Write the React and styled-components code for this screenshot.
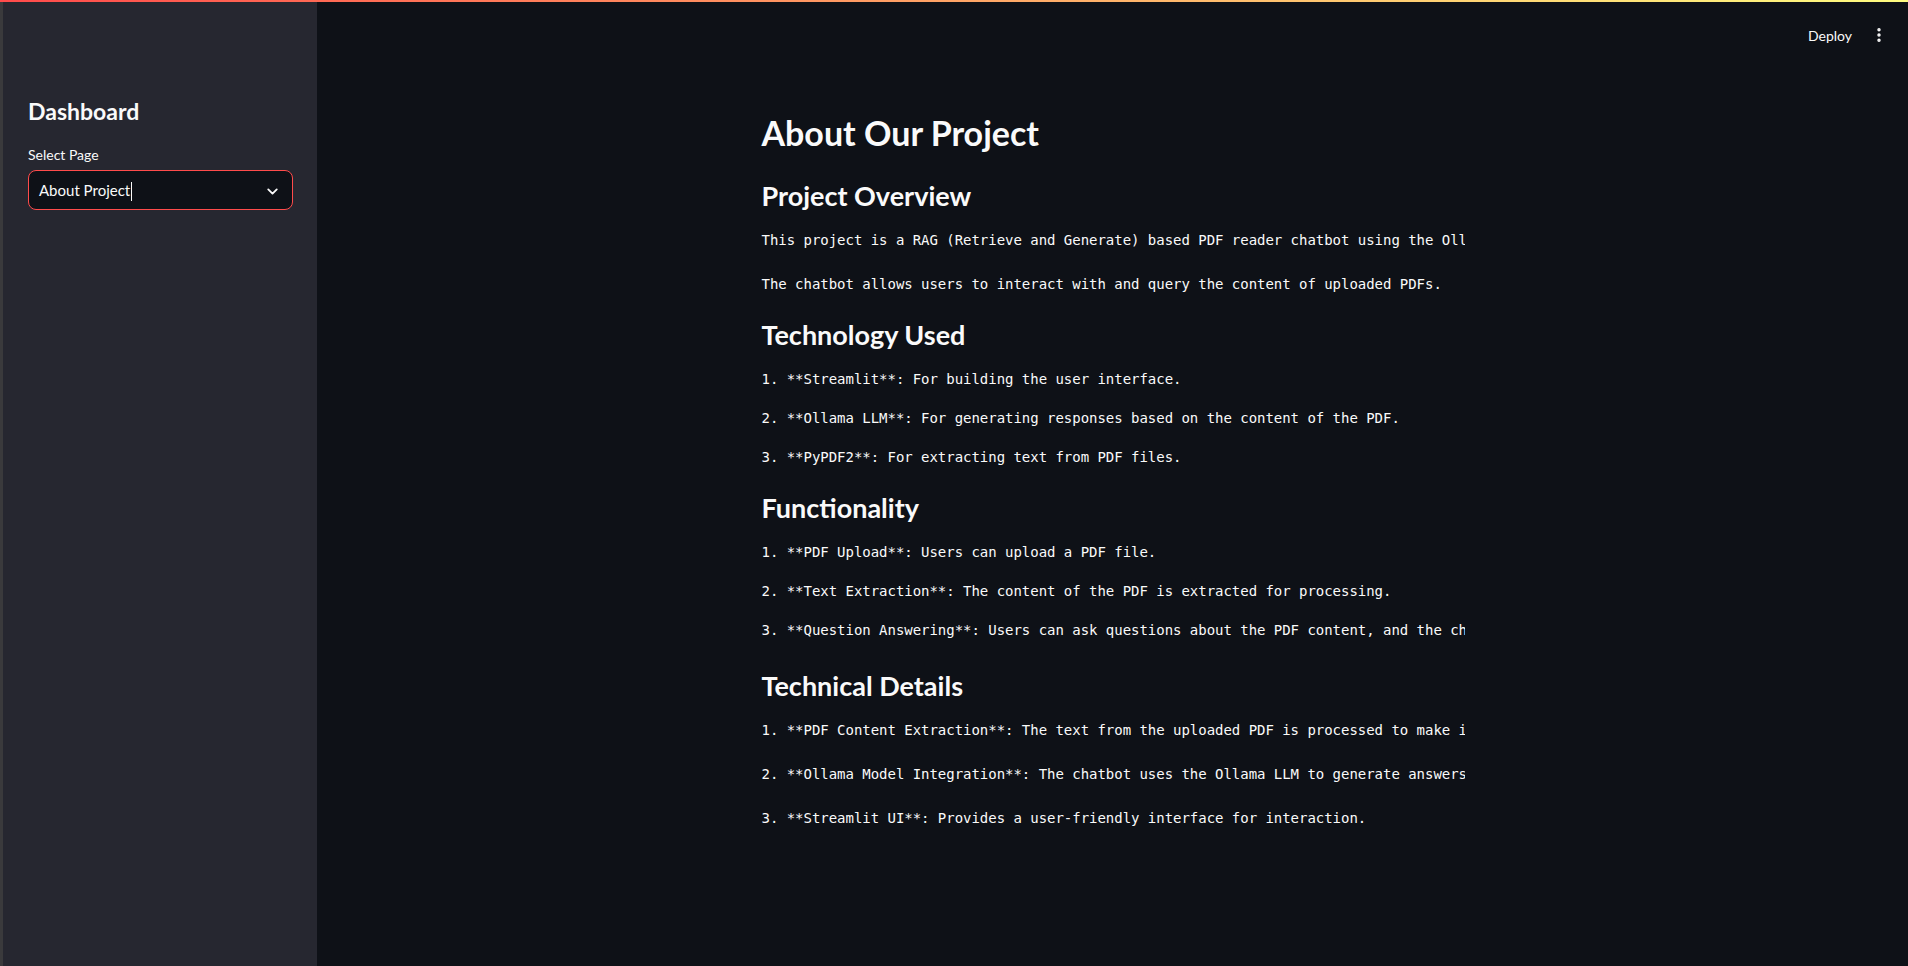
import React from 'react';
import styled, { createGlobalStyle } from 'styled-components';
import { ChevronDown, EllipsisVertical } from 'lucide-react';

const GlobalStyle = createGlobalStyle`
  html, body {
    margin: 0;
    padding: 0;
    background: #0e1117;
    color: #fafafa;
    font-family: Lato, "Noto Sans", sans-serif;
  }
  * {
    box-sizing: border-box;
  }
`;

const Page = styled.div`
  min-height: 100vh;
  display: flex;
  flex-direction: column;
  background: #0e1117;
`;

const Decoration = styled.div`
  height: 2px;
  background: linear-gradient(90deg, #ff4b4b 0%, #fffd80 100%);
`;

const Body = styled.div`
  flex: 1;
  display: flex;
`;

const Edge = styled.div`
  width: 3px;
  background: #3a3a3c;
`;

const Sidebar = styled.aside`
  width: 314px;
  background: #262730;
  padding: 93px 24px 0 25px;
  display: flex;
  flex-direction: column;
`;

const SideTitle = styled.h2`
  margin: 0;
  font-size: 23px;
  line-height: 32px;
  font-weight: 700;
`;

const Label = styled.label`
  margin-top: 18px;
  font-size: 14px;
  line-height: 20px;
`;

const Select = styled.div`
  margin-top: 5px;
  height: 40px;
  border: 1px solid #ff4b4b;
  border-radius: 8px;
  background: #0e1117;
  display: flex;
  align-items: center;
  justify-content: space-between;
  padding: 2px 11px 0 10px;
  font-size: 15px;
`;

const Caret = styled.span`
  display: inline-block;
  width: 1px;
  height: 19px;
  margin-left: 1px;
  vertical-align: middle;
  background: #fafafa;
`;

const Main = styled.main`
  flex: 1;
  display: flex;
  flex-direction: column;
`;

const Toolbar = styled.header`
  height: 60px;
  margin-top: 3px;
  display: flex;
  align-items: center;
  justify-content: flex-end;
  gap: 18px;
  padding-right: 20px;
`;

const Deploy = styled.button`
  background: none;
  border: none;
  color: #fafafa;
  font-family: inherit;
  font-size: 14px;
  padding: 0;
  cursor: pointer;
`;

const Content = styled.div`
  width: 704px;
  margin: 48px auto 0;
  display: flex;
  flex-direction: column;
`;

const Title = styled.h1`
  margin: -2px 0 19px 1px;
  font-size: 34px;
  line-height: 44px;
  font-weight: 700;
`;

const Heading = styled.h2`
  margin: 4px 0 16px 1px;
  font-size: 27px;
  line-height: 36px;
  font-weight: 700;
`;

const Line = styled.div`
  font-family: "DejaVu Sans Mono", "Liberation Mono", monospace;
  font-size: 14px;
  line-height: 20px;
  letter-spacing: -0.03px;
  white-space: pre;
  overflow: hidden;
  padding-left: 1px;
  margin-bottom: ${p => (p.$wide ? '24px' : '19px')};
`;

const sections = [
  {
    title: 'Project Overview',
    lines: [
      'This project is a RAG (Retrieve and Generate) based PDF reader chatbot using the Ollama LLM model.',
      'The chatbot allows users to interact with and query the content of uploaded PDFs.',
    ],
  },
  {
    title: 'Technology Used',
    lines: [
      '1. **Streamlit**: For building the user interface.',
      '2. **Ollama LLM**: For generating responses based on the content of the PDF.',
      '3. **PyPDF2**: For extracting text from PDF files.',
    ],
  },
  {
    title: 'Functionality',
    lines: [
      '1. **PDF Upload**: Users can upload a PDF file.',
      '2. **Text Extraction**: The content of the PDF is extracted for processing.',
      '3. **Question Answering**: Users can ask questions about the PDF content, and the chatbot will provide answers.',
    ],
  },
  {
    title: 'Technical Details',
    lines: [
      '1. **PDF Content Extraction**: The text from the uploaded PDF is processed to make it searchable.',
      '2. **Ollama Model Integration**: The chatbot uses the Ollama LLM to generate answers based on the PDF content.',
      '3. **Streamlit UI**: Provides a user-friendly interface for interaction.',
    ],
  },
];

const App = () => (
  <Page>
    <GlobalStyle />
    <Decoration />
    <Body>
      <Edge />
      <Sidebar>
        <SideTitle>Dashboard</SideTitle>
        <Label>Select Page</Label>
        <Select>
          <span>About Project<Caret /></span>
          <ChevronDown size={17} strokeWidth={2.6} color="#fafafa" />
        </Select>
      </Sidebar>
      <Main>
        <Toolbar>
          <Deploy>Deploy</Deploy>
          <EllipsisVertical size={18} strokeWidth={2.6} color="#fafafa" />
        </Toolbar>
        <Content>
          <Title>About Our Project</Title>
          {sections.map(s => (
            <React.Fragment key={s.title}>
              <Heading>{s.title}</Heading>
              {s.lines.map(l => (
                <Line key={l} $wide={l.length > 84}>{l}</Line>
              ))}
            </React.Fragment>
          ))}
        </Content>
      </Main>
    </Body>
  </Page>
);

export default App;
